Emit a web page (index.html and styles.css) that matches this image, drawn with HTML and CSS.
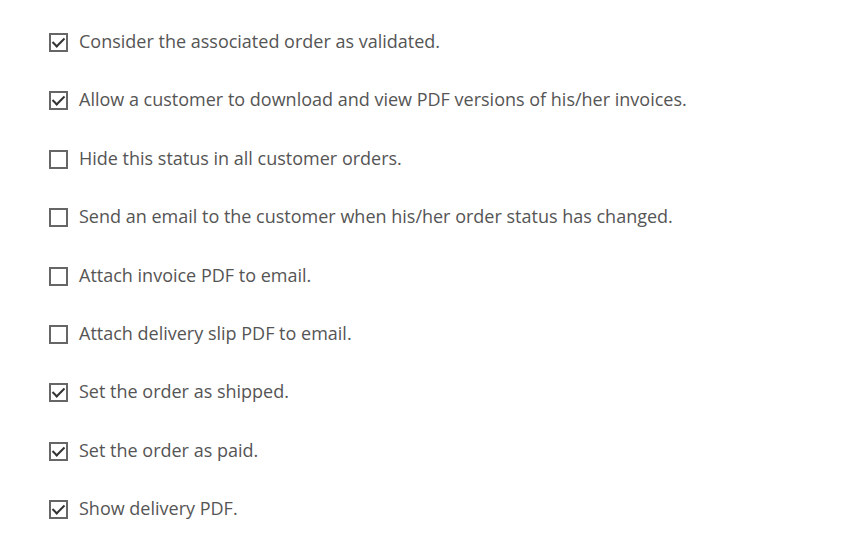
FILE: index.html
```html
<!DOCTYPE html>
<html>
<head>
<meta charset="utf-8">
<link rel="stylesheet" href="styles.css">
</head>
<body>
<ul class="options">
  <li class="option"><span class="box checked"></span><span class="label">Consider the associated order as validated.</span></li>
  <li class="option"><span class="box checked"></span><span class="label">Allow a customer to download and view PDF versions of his/her invoices.</span></li>
  <li class="option"><span class="box"></span><span class="label">Hide this status in all customer orders.</span></li>
  <li class="option"><span class="box"></span><span class="label">Send an email to the customer when his/her order status has changed.</span></li>
  <li class="option"><span class="box"></span><span class="label">Attach invoice PDF to email.</span></li>
  <li class="option"><span class="box"></span><span class="label">Attach delivery slip PDF to email.</span></li>
  <li class="option"><span class="box checked"></span><span class="label">Set the order as shipped.</span></li>
  <li class="option"><span class="box checked"></span><span class="label">Set the order as paid.</span></li>
  <li class="option"><span class="box checked"></span><span class="label">Show delivery PDF.</span></li>
</ul>
</body>
</html>
```
FILE: styles.css
```css
html, body { margin: 0; padding: 0; background: #fff; }
body { font-family: "Open Sans", sans-serif; color: #555; }
.options {
  list-style: none;
  margin: 0;
  padding: 29px 0 0 49px;
  display: flex;
  flex-direction: column;
  gap: 34.4px;
}
.option {
  display: flex;
  align-items: center;
  gap: 11px;
  height: 24px;
}
.box {
  width: 15px;
  height: 15px;
  border: 2px solid #666;
  flex: none;
  position: relative;
  background: #fff;
  margin-top: 3px;
}
.box.checked::after {
  content: "";
  position: absolute;
  left: 4px;
  top: 0px;
  width: 5px;
  height: 10px;
  border-right: 2px solid #333;
  border-bottom: 2px solid #333;
  transform: rotate(45deg);
}
.label { font-size: 18px; line-height: 24px; }
```
